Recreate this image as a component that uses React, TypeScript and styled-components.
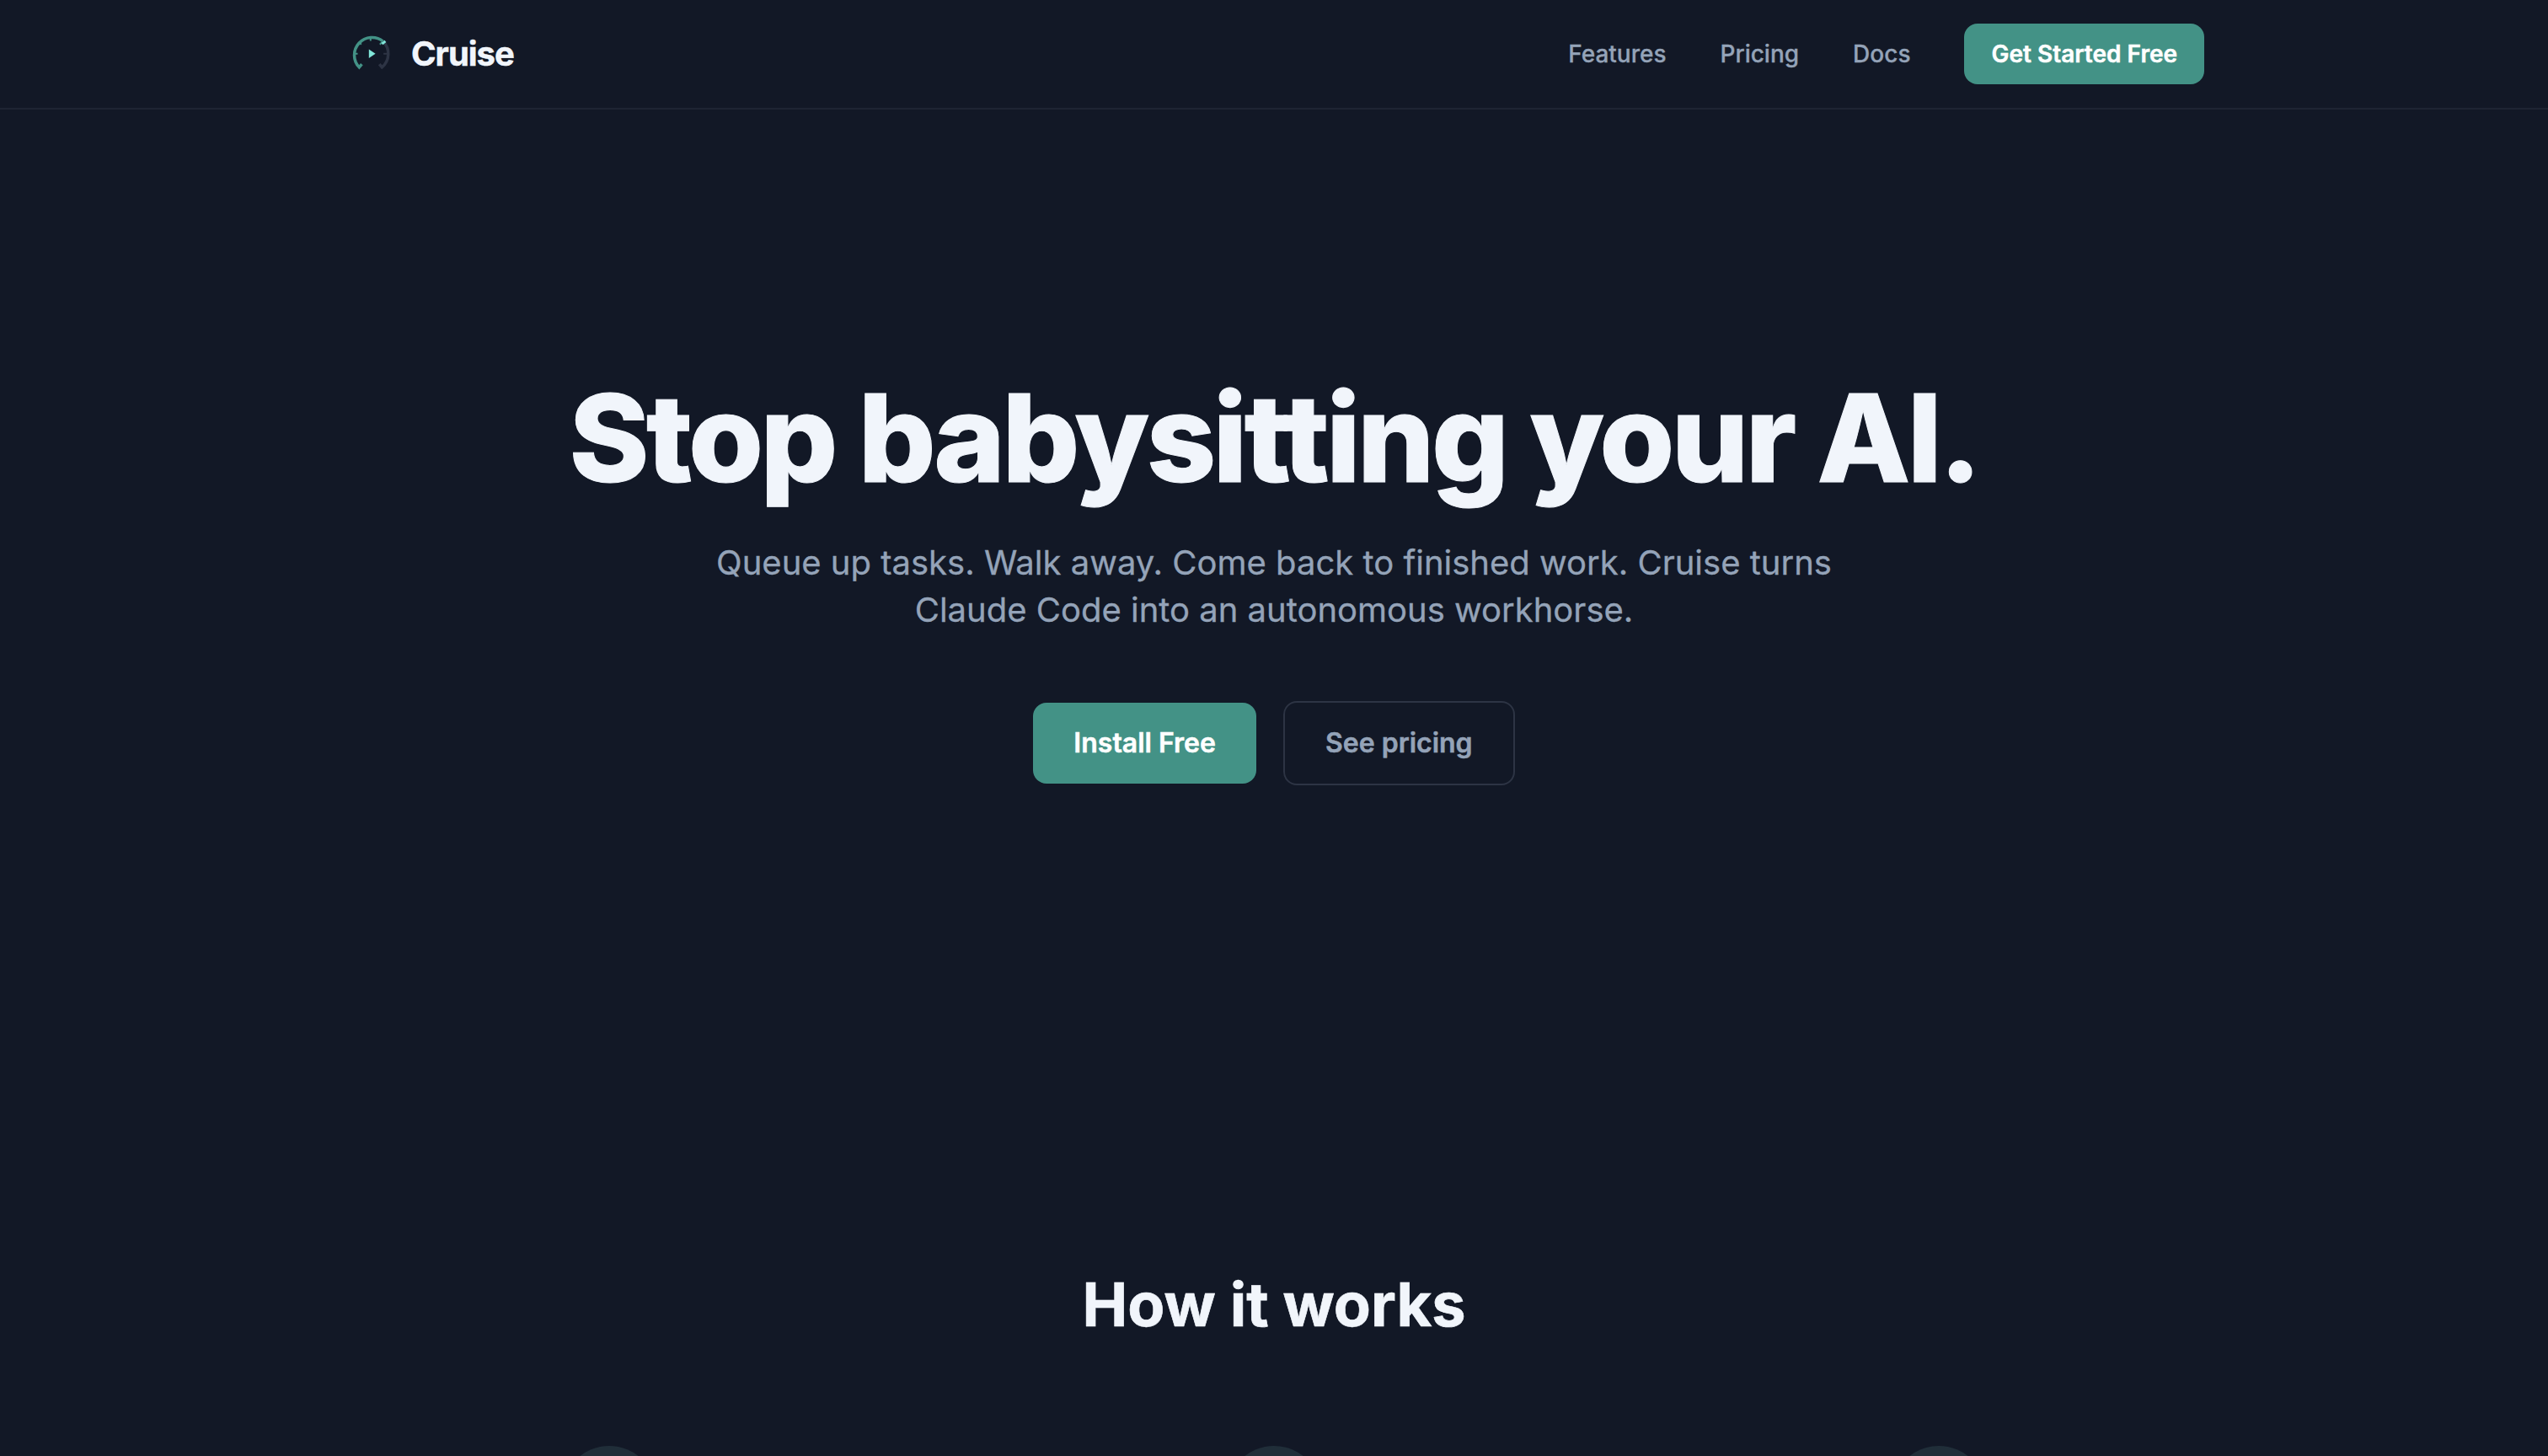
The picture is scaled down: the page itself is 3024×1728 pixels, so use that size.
import styled, { createGlobalStyle } from "styled-components";

const GlobalStyle = createGlobalStyle`
  * {
    box-sizing: border-box;
    margin: 0;
    padding: 0;
  }
  html,
  body {
    height: 100%;
    overflow: hidden;
  }
  body {
    background-color: #121826;
    color: #f1f5fb;
    font-family: Inter, "Liberation Sans", sans-serif;
    -webkit-font-smoothing: antialiased;
  }
`;

const Page = styled.div`
  height: 1728px;
  overflow: hidden;
`;

const Nav = styled.nav`
  padding: 28px 0;
  border-bottom: 2px solid #1e2433;
`;

const NavInner = styled.div`
  display: flex;
  justify-content: space-between;
  align-items: center;
  width: 2208px;
  height: 72px;
  margin: 0 auto;
`;

const Brand = styled.a`
  display: flex;
  align-items: center;
  gap: 16px;
  font-size: 40px;
  font-weight: 700;
  line-height: 48px;
  letter-spacing: -0.025em;
  -webkit-text-stroke: 0.5px currentColor;
`;

const NavLinks = styled.div`
  display: flex;
  align-items: center;
  gap: 64px;
`;

const NavLink = styled.a`
  color: #94a3b8;
  font-size: 28px;
  font-weight: 500;
  -webkit-text-stroke: 0.3px currentColor;
`;

const NavButton = styled.a`
  padding: 0 32px;
  border-radius: 16px;
  background-color: #439286;
  color: white;
  font-size: 28px;
  font-weight: 600;
  line-height: 72px;
  -webkit-text-stroke: 0.5px currentColor;
`;

const Hero = styled.header`
  display: flex;
  flex-direction: column;
  align-items: center;
  padding-top: 311px;
  text-align: center;
`;

const HeroTitle = styled.h1`
  font-size: 144px;
  font-weight: 800;
  line-height: 158px;
  letter-spacing: -0.025em;
  -webkit-text-stroke: 1px currentColor;
`;

const HeroText = styled.p`
  width: 1360px;
  margin-top: 41px;
  color: #94a3b8;
  font-size: 40px;
  line-height: 56px;
  -webkit-text-stroke: 0.3px currentColor;
`;

const HeroButtons = styled.div`
  display: flex;
  align-items: center;
  gap: 32px;
  margin-top: 80px;
`;

const Button = styled.a<{ $outline?: boolean }>`
  padding: 0 48px;
  border: ${(props) => (props.$outline ? "2px solid #2d3444" : "none")};
  border-radius: 16px;
  background-color: ${(props) => (props.$outline ? "transparent" : "#439286")};
  color: ${(props) => (props.$outline ? "#94a3b8" : "white")};
  font-size: 32px;
  font-weight: 600;
  line-height: 96px;
  -webkit-text-stroke: 0.5px currentColor;
`;

const HowItWorks = styled.section`
  width: 2208px;
  margin: 0 auto;
  padding-top: 572px;
`;

const SectionTitle = styled.h2`
  font-size: 72px;
  font-weight: 700;
  line-height: 88px;
  text-align: center;
  -webkit-text-stroke: 0.7px currentColor;
`;

const Steps = styled.div`
  display: grid;
  grid-template-columns: repeat(3, 1fr);
  gap: 160px;
  margin-top: 124px;
`;

const StepCircle = styled.div`
  width: 112px;
  height: 112px;
  margin: 0 auto;
  border-radius: 50%;
  background-color: #202e39;
`;

const Logo = () => (
  <svg width="64" height="64" viewBox="0.2 0.2 64 64" fill="none">
    <path
      d="M46.8 17.2A21 21 0 0 1 45.5 48.1l-3.1-3.7"
      stroke="#2d3444"
      strokeWidth="3.5"
    />
    <path d="M47.3 32h4.4" stroke="#2d3444" strokeWidth="2" />
    <path
      d="M21.6 44.4l-3.1 3.7A21 21 0 0 1 46.8 17.2"
      stroke="#439286"
      strokeWidth="3.5"
    />
    <path
      d="M12 32h4.7M18 18l3 3M32 12v4.7M46 18l-3 3"
      stroke="#439286"
      strokeWidth="2"
    />
    <path d="M45.6 20.4l4-3.3" stroke="#81e6d9" strokeWidth="3" />
    <path d="M30 26.8v10.4l7.8-5.2z" fill="#81e6d9" />
  </svg>
);

function App() {
  return (
    <Page>
      <GlobalStyle />
      <Nav>
        <NavInner>
          <Brand>
            <Logo />
            Cruise
          </Brand>
          <NavLinks>
            <NavLink>Features</NavLink>
            <NavLink>Pricing</NavLink>
            <NavLink>Docs</NavLink>
            <NavButton>Get Started Free</NavButton>
          </NavLinks>
        </NavInner>
      </Nav>
      <Hero>
        <HeroTitle>Stop babysitting your AI.</HeroTitle>
        <HeroText>
          Queue up tasks. Walk away. Come back to finished work. Cruise turns
          Claude Code into an autonomous workhorse.
        </HeroText>
        <HeroButtons>
          <Button>Install Free</Button>
          <Button $outline>See pricing</Button>
        </HeroButtons>
      </Hero>
      <HowItWorks>
        <SectionTitle>How it works</SectionTitle>
        <Steps>
          <StepCircle />
          <StepCircle />
          <StepCircle />
        </Steps>
      </HowItWorks>
    </Page>
  );
}

export default App;
